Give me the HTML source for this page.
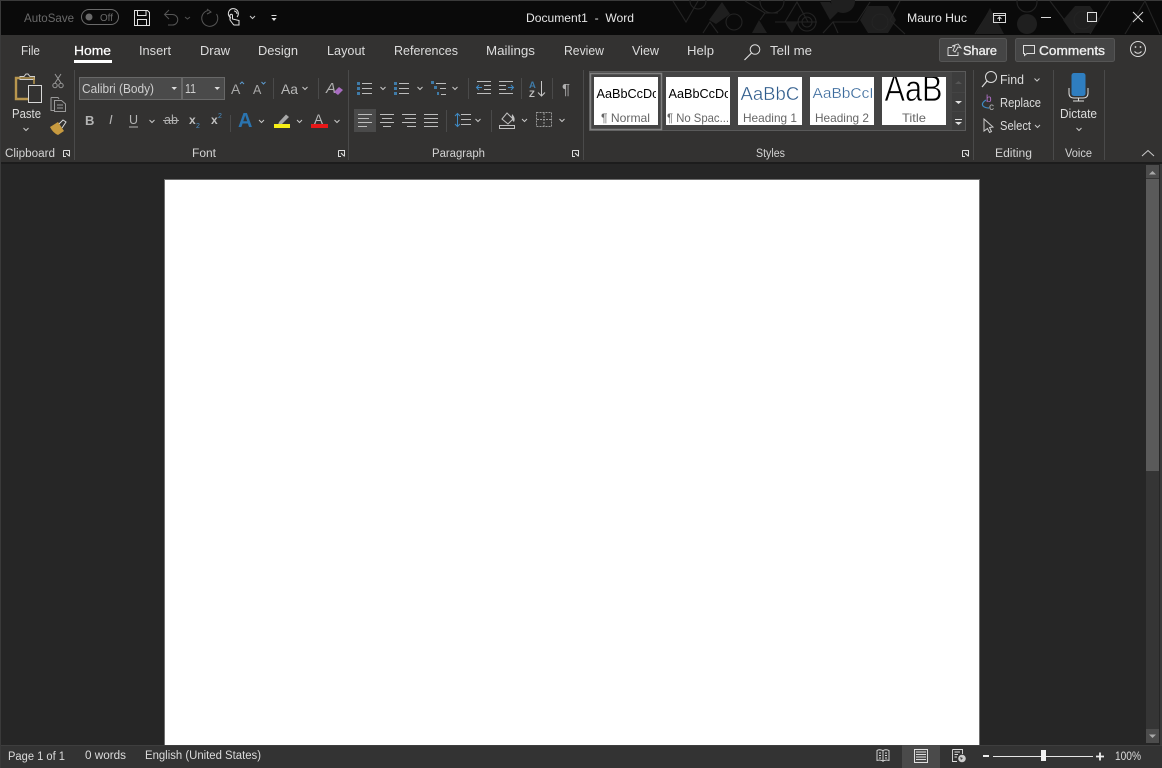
<!DOCTYPE html>
<html><head><meta charset="utf-8"><title>Document1 - Word</title>
<style>
html,body{margin:0;padding:0;background:#262626;width:1162px;height:768px;overflow:hidden}
svg{display:block}
text{font-family:"Liberation Sans",sans-serif;font-size:12.5px;fill:#dcdcdc}
.g{font-size:11.5px;fill:#d4d4d4}
.ln{fill:none;stroke:#bdbdbd;stroke-width:1}
.ch{fill:none;stroke:#c8c8c8;stroke-width:1}
.sep{stroke:#4a4a4a;stroke-width:1}
.p{fill:none;stroke:#242424;stroke-width:1.1}
.pf{fill:#1f1f1f}
</style></head><body>
<svg width="1162" height="768" viewBox="0 0 1162 768" xmlns="http://www.w3.org/2000/svg">
<!-- backgrounds -->
<rect width="1162" height="768" fill="#262626"/>
<rect x="0" y="0" width="1162" height="35" fill="#0a0a0a"/>
<rect x="0" y="0" width="1162" height="1" fill="#3a3a3a"/>
<rect x="0" y="0" width="1" height="768" fill="#3a3a3a"/>
<rect x="1" y="35" width="1161" height="127" fill="#333231"/>
<rect x="1" y="162" width="1161" height="2" fill="#1c1c1c"/>
<rect x="1" y="745" width="1161" height="23" fill="#333333"/>
<!-- title pattern -->
<g>
<path class="p" d="M673 1L686 22L698 1"/><circle class="p" cx="698" cy="1" r="8"/>
<path class="pf" d="M722 2L730 14L716 24L709 20Z"/>
<circle class="p" cx="734" cy="22" r="8"/>
<path class="p" d="M703 33L710 22L718 33M745 1L765 13L760 20M765 13H778"/>
<circle class="p" cx="772" cy="1" r="12"/>
<path class="pf" d="M752 33L759 20L767 33Z"/>
<path class="p" d="M785 22L797 2L808 22M775 22H817"/>
<path class="pf" d="M785 22H798L792 33Z"/>
<circle class="p" cx="807" cy="22" r="9"/><circle class="p" cx="807" cy="22" r="5"/>
<path class="p" d="M823 33L833 22L838 33M833 22H857M857 22L870 2"/>
<path class="pf" d="M820 2H830L838 12L830 20Z"/>
<circle class="pf" cx="843" cy="1" r="12"/>
<circle class="p" cx="880" cy="22" r="9"/>
<path class="pf" d="M868 6H888L896 20L888 33H868L860 20Z"/>
<circle class="p" cx="880" cy="22" r="8"/>
<path class="p" d="M900 1L890 20L905 34M975 34L990 10"/>
<path class="pf" d="M990 8L1004 34H976Z"/>
<circle class="p" cx="1027" cy="2" r="10"/>
<circle class="pf" cx="1027" cy="24" r="10"/>
<path class="p" d="M1050 1L1075 34M1110 1L1090 34M1125 34L1145 1L1160 34"/>
<path class="pf" d="M1075 6H1090L1100 20L1090 33H1072L1063 20Z"/>
<circle class="p" cx="1083" cy="20" r="9"/>
</g>
<!-- quick access -->
<text x="24" y="22" textLength="50" lengthAdjust="spacingAndGlyphs" style="fill:#6a6a6a;font-size:12px">AutoSave</text>
<rect x="81.500" y="9.500" width="37" height="15" rx="7.500" fill="none" stroke="#6a6a6a"/>
<circle cx="89" cy="17" r="3.500" fill="#6a6a6a"/>
<text x="100" y="21" textLength="13" lengthAdjust="spacingAndGlyphs" style="fill:#6a6a6a;font-size:10.500px">Off</text>
<path d="M134.500 10.500H147.500L149.500 12.500V25.500H134.500Z M137.500 10.500V15.500H146V10.500 M137.500 25.500V19.500H146.500V25.500" fill="none" stroke="#e0e0e0"/>
<path d="M169 10L164.500 14.500L169 19M165 14.500H172.500A5 5 0 0 1 172.500 25H168" fill="none" stroke="#555"/>
<path class="ch" style="stroke:#555" d="M185 17L187.500 19L190 17"/>
<path d="M208 10.500A8 8 0 1 0 216.500 14M207 9L211 12L207 14" fill="none" stroke="#555"/>
<path d="M234 11a3 3 0 0 1 3 3M231 18a5 5 0 1 1 6-1M233 24L230 20V15.500a1.200 1.200 0 0 1 2.500 0V19L239 20.500V25H234Z" fill="none" stroke="#e0e0e0"/>
<path class="ch" d="M250 16L252.500 18.500L255 16"/>
<path d="M271.500 15.500H276.500" stroke="#ddd"/><path d="M271.500 18H276.500L274 21Z" fill="#ddd"/>
<text x="526" y="22" textLength="108" lengthAdjust="spacingAndGlyphs" xml:space="preserve" style="font-size:12px;fill:#e6e6e6">Document1  -  Word</text>
<text x="907" y="22" textLength="60" lengthAdjust="spacingAndGlyphs" style="font-size:12px;fill:#e6e6e6">Mauro Huc</text>
<!-- window controls -->
<path d="M993.500 13.500H1005.500V22.500H993.500ZM993.500 15.500H1005.500M999.500 21V17M997.500 19L999.500 17L1001.500 19" fill="none" stroke="#d8d8d8"/>
<path d="M1041 17.500H1051" stroke="#d8d8d8"/>
<rect x="1087.500" y="12.500" width="9" height="9" fill="none" stroke="#e0e0e0"/>
<path d="M1133 12L1143 22M1143 12L1133 22" stroke="#d8d8d8"/>
<!-- tabs -->
<text x="21" y="55" textLength="19" lengthAdjust="spacingAndGlyphs">File</text>
<text x="74" y="55" textLength="37" lengthAdjust="spacingAndGlyphs" style="fill:#fff;stroke:#fff;stroke-width:.25">Home</text>
<rect x="74" y="60" width="38" height="3" fill="#fff"/>
<text x="139" y="55" textLength="32" lengthAdjust="spacingAndGlyphs">Insert</text>
<text x="200" y="55" textLength="30" lengthAdjust="spacingAndGlyphs">Draw</text>
<text x="258" y="55" textLength="40" lengthAdjust="spacingAndGlyphs">Design</text>
<text x="327" y="55" textLength="38" lengthAdjust="spacingAndGlyphs">Layout</text>
<text x="394" y="55" textLength="64" lengthAdjust="spacingAndGlyphs">References</text>
<text x="486" y="55" textLength="49" lengthAdjust="spacingAndGlyphs">Mailings</text>
<text x="564" y="55" textLength="40" lengthAdjust="spacingAndGlyphs">Review</text>
<text x="632" y="55" textLength="27" lengthAdjust="spacingAndGlyphs">View</text>
<text x="687" y="55" textLength="27" lengthAdjust="spacingAndGlyphs">Help</text>
<circle cx="755" cy="49.500" r="4.800" fill="none" stroke="#ddd"/><path d="M751.500 53L744.500 60" stroke="#ddd" stroke-width="1.200"/>
<text x="770" y="55" textLength="42" lengthAdjust="spacingAndGlyphs">Tell me</text>
<!-- share / comments -->
<rect x="939.500" y="38.500" width="67" height="23" rx="2" fill="#454545" stroke="#555"/>
<path d="M948 47.500H952M948 47.500V55.500H958V52M953 50.500L955 46H952L958 44L961 48L958 47L955 52Z" fill="none" stroke="#ddd" stroke-width=".9"/>
<text x="963" y="55" textLength="34" lengthAdjust="spacingAndGlyphs" style="fill:#eee;stroke:#eee;stroke-width:.35;font-size:13px">Share</text>
<rect x="1015.500" y="38.500" width="99" height="23" rx="2" fill="#454545" stroke="#555"/>
<path d="M1023.500 45.500H1034.500V53.500H1027L1024.500 55.500V53.500H1023.500Z" fill="none" stroke="#ddd"/>
<text x="1039" y="55" textLength="66" lengthAdjust="spacingAndGlyphs" style="fill:#eee;stroke:#eee;stroke-width:.35;font-size:13px">Comments</text>
<circle cx="1138" cy="49" r="7.500" fill="none" stroke="#ddd"/><circle cx="1135.500" cy="47" r=".9" fill="#ddd"/><circle cx="1140.500" cy="47" r=".9" fill="#ddd"/>
<path d="M1134.500 51.500Q1138 55 1141.500 51.500" fill="none" stroke="#ddd"/>
<!-- group separators -->
<path class="sep" d="M74.500 70V160M348.500 70V160M583.500 70V160M973.500 70V160M1053.500 70V160M1104.500 70V160"/>
<!-- group labels -->
<text class="g" x="5" y="157" textLength="50" lengthAdjust="spacingAndGlyphs">Clipboard</text>
<text class="g" x="192" y="157" textLength="24" lengthAdjust="spacingAndGlyphs">Font</text>
<text class="g" x="432" y="157" textLength="53" lengthAdjust="spacingAndGlyphs">Paragraph</text>
<text class="g" x="756" y="157" textLength="29" lengthAdjust="spacingAndGlyphs">Styles</text>
<text class="g" x="995" y="157" textLength="37" lengthAdjust="spacingAndGlyphs">Editing</text>
<text class="g" x="1065" y="157" textLength="27" lengthAdjust="spacingAndGlyphs">Voice</text>
<!-- launchers -->
<g fill="none" stroke="#ddd">
<path d="M63.500 150.500H69.500V156.500M63.500 150.500V156.500H66"/><path d="M66 153L69 156" stroke-width="1.200"/>
<path d="M338.500 150.500H344.500V156.500M338.500 150.500V156.500H341"/><path d="M341 153L344 156" stroke-width="1.200"/>
<path d="M572.500 150.500H578.500V156.500M572.500 150.500V156.500H575"/><path d="M575 153L578 156" stroke-width="1.200"/>
<path d="M962.500 150.500H968.500V156.500M962.500 150.500V156.500H965"/><path d="M965 153L968 156" stroke-width="1.200"/>
</g>
<path d="M1142 156L1148 150.500L1154 156" fill="none" stroke="#ccc"/>
<!-- paste -->
<path d="M20 78H16V99H28" fill="none" stroke="#b8964e" stroke-width="2.400"/>
<path d="M20 79.500V76.500H24L26 74H28L30 76.500H34.500V79.500Z" fill="none" stroke="#d0d0d0"/>
<path d="M16 78H34V84" fill="none" stroke="#b8964e" stroke-width="1.500"/>
<rect x="28.500" y="85.500" width="13" height="17" fill="#333231" stroke="#d8d8d8"/>
<text x="12" y="118" textLength="29" lengthAdjust="spacingAndGlyphs">Paste</text>
<path class="ch" d="M23.500 128L26 130.500L28.500 128"/>
<!-- cut copy painter -->
<g fill="none" stroke="#9a9a9a">
<path d="M55 74L61 83M61 74L55 83"/><circle cx="55" cy="85.500" r="2.200"/><circle cx="61" cy="85.500" r="2.200"/>
<path d="M51 97.500V110.500H54M51 97.500H58L59 99"/><path d="M54.500 100.500H61.500L65.500 104V111.500H54.500ZM57 105H63M57 108H63"/>
</g>
<path d="M50 127L58 122L64 131L58 135Q53 133 50 127Z" fill="#c79a3f"/>
<path d="M59 124L63 120L66 122L62 128" fill="none" stroke="#d8d8d8"/>
<!-- font boxes -->
<rect x="79.500" y="77.500" width="102" height="22" fill="#4a4a4a" stroke="#686868"/>
<rect x="182.500" y="77.500" width="42" height="22" fill="#4a4a4a" stroke="#686868"/>
<text x="82" y="93" textLength="72" lengthAdjust="spacingAndGlyphs" style="fill:#cfcfcf">Calibri (Body)</text>
<text x="185" y="93" textLength="11" lengthAdjust="spacingAndGlyphs" style="fill:#cfcfcf">11</text>
<path d="M171.500 87H177L174.200 90Z" fill="#ddd"/>
<path d="M214.500 87H220L217.200 90Z" fill="#ddd"/>
<text x="231" y="94" style="font-size:14px;fill:#a8a8a8">A</text>
<path d="M240 84L242 82L244 84" fill="none" stroke="#5c9bd0"/>
<text x="253" y="94" style="font-size:12.500px;fill:#a8a8a8">A</text>
<path d="M261.500 82L263.500 84L265.500 82" fill="none" stroke="#5c9bd0"/>
<path class="sep" d="M273.500 78V99M318.500 78V99M230.500 115V132"/>
<text x="281" y="94" textLength="17" lengthAdjust="spacingAndGlyphs" style="font-size:14px;fill:#b8b8b8">Aa</text>
<path class="ch" d="M302.500 87L305 89.500L307.500 87"/>
<text x="326" y="93" style="font-size:15px;font-style:italic;fill:#b0b0b0">A</text>
<path d="M334 92L339 87L343 90L338 95Z" fill="#a86cc0"/>
<!-- font row 2 -->
<text x="85" y="125" style="font-weight:bold;font-size:13px;fill:#b4b4b4">B</text>
<text x="109" y="124" style="font-style:italic;font-size:13px;fill:#b4b4b4">I</text>
<text x="129" y="124" style="font-size:12.500px;fill:#b4b4b4">U</text>
<path d="M129 127H138" stroke="#b4b4b4"/>
<path class="ch" d="M149.500 120L152 122.500L154.500 120"/>
<text x="164" y="124" style="font-size:12.500px;fill:#b0b0b0">ab</text>
<path d="M163 120.500H179" stroke="#b0b0b0"/>
<text x="189" y="124" style="font-weight:bold;font-size:12px;fill:#c0c0c0">x</text><text x="196" y="128" style="font-size:7px;fill:#4a90c8">2</text>
<text x="211" y="124" style="font-weight:bold;font-size:12px;fill:#c0c0c0">x</text><text x="218" y="118" style="font-size:7px;fill:#4a90c8">2</text>
<text x="238" y="127" style="font-weight:bold;font-size:20px;fill:#2a74b0">A</text>
<path class="ch" d="M259 120L261.500 122.500L264 120"/>
<path d="M279 122L286 114.500L289 117L282 124L278 125Z" fill="#a8a8a8"/>
<rect x="274" y="124" width="16" height="4" fill="#f6ee16"/>
<path class="ch" d="M297 120L299.500 122.500L302 120"/>
<text x="314" y="124" style="font-size:13.500px;fill:#b8b8b8">A</text>
<rect x="311" y="124" width="17" height="4" fill="#e81818"/>
<path class="ch" d="M334.500 120L337 122.500L339.500 120"/>
<!-- paragraph row 1 -->
<g fill="#3f7ba8"><rect x="357" y="82" width="3" height="3"/><rect x="357" y="87" width="3" height="3"/><rect x="357" y="92" width="3" height="3"/></g>
<path class="ln" d="M362 83.500H372M362 88.500H372M362 93.500H372"/>
<path class="ch" d="M380.500 87L383 89.500L385.500 87"/>
<g fill="#3f7ba8"><rect x="394" y="82" width="3" height="3"/><rect x="394" y="87" width="3" height="3"/><rect x="394" y="92" width="3" height="3"/></g>
<path class="ln" d="M399 83.500H409M399 88.500H409M399 93.500H409"/>
<path class="ch" d="M417.500 87L420 89.500L422.500 87"/>
<g fill="#3f7ba8"><rect x="431" y="81" width="3" height="3"/><rect x="434" y="86" width="3" height="3"/><rect x="437" y="92" width="2" height="3"/></g>
<path class="ln" d="M436 83.500H446M440 88.500H446M441 94.500H446"/>
<path class="ch" d="M452.500 87L455 89.500L457.500 87"/>
<path class="sep" d="M468.500 78V99M521.500 78V99M552.500 78V99M446.500 110V132M491.500 110V132"/>
<path class="ln" d="M477 81.500H491M484 85.500H491M484 89.500H491M477 93.500H491"/>
<path d="M482 87.500H477M479 85L476.500 87.500L479 90" fill="none" stroke="#3f8ac4"/>
<path class="ln" d="M499 81.500H513M499 85.500H506M499 89.500H506M499 93.500H513"/>
<path d="M508 87.500H513M511 85L513.500 87.500L511 90" fill="none" stroke="#3f8ac4"/>
<text x="529" y="88" style="font-size:9.500px;font-weight:bold;fill:#3f7ba8">A</text>
<text x="529" y="97" style="font-size:9.500px;font-weight:bold;fill:#c0c0c0">Z</text>
<path d="M541.500 81V96M538 92.500L541.500 96L545 92.500" fill="none" stroke="#c8c8c8"/>
<text x="562" y="94" style="font-size:15px;fill:#b0b0b0">¶</text>
<!-- paragraph row 2 -->
<rect x="354" y="109" width="22" height="23" fill="#4a4a4a"/>
<path class="ln" d="M358 114.500H372M358 118.500H369M358 122.500H372M358 126.500H367"/>
<path class="ln" d="M380 114.500H394M382 118.500H392M380 122.500H394M383 126.500H391"/>
<path class="ln" d="M402 114.500H416M405 118.500H416M402 122.500H416M407 126.500H416"/>
<path class="ln" d="M424 114.500H438M424 118.500H438M424 122.500H438M424 126.500H438"/>
<path d="M457.500 114V126M455 116L457.500 113.500L460 116M455 124L457.500 126.500L460 124" fill="none" stroke="#3f8ac4"/>
<path class="ln" d="M461 114.500H471M461 119.500H471M461 124.500H471"/>
<path class="ch" d="M475.500 119L478 121.500L480.500 119"/>
<path d="M502 119L507 113L513 119L508 124Z" fill="none" stroke="#c0c0c0"/>
<path d="M512 114Q516 118 514 122Q511 120 512 114Z" fill="#c0c0c0"/>
<rect x="499.500" y="125.500" width="15" height="3" fill="none" stroke="#c0c0c0"/>
<path class="ch" d="M522 119L524.500 121.500L527 119"/>
<rect x="536.500" y="112.500" width="15" height="14" fill="none" stroke="#999" stroke-dasharray="2 1"/>
<path d="M544 113V126M537 119.500H551" stroke="#999" stroke-dasharray="2 1"/>
<path class="ch" d="M559.500 119L562 121.500L564.500 119"/>
<!-- styles gallery -->
<rect x="589.500" y="71.500" width="376" height="59" fill="#444" stroke="#5a5a5a"/>
<rect x="590.500" y="73.500" width="71" height="56" fill="none" stroke="#808080" stroke-width="1.500"/>
<g fill="#fff"><rect x="594" y="77" width="64" height="48"/><rect x="666" y="77" width="64" height="48"/><rect x="738" y="77" width="64" height="48"/><rect x="810" y="77" width="64" height="48"/><rect x="882" y="77" width="64" height="48"/></g>
<svg x="594" y="77" width="62" height="48"><text x="2.500" y="21" textLength="62" lengthAdjust="spacingAndGlyphs" style="fill:#000;font-size:12.500px">AaBbCcDc</text></svg>
<text x="601" y="122" textLength="49" lengthAdjust="spacingAndGlyphs" style="fill:#666;font-size:12px">¶ Normal</text>
<svg x="666" y="77" width="62" height="48"><text x="2.500" y="21" textLength="62" lengthAdjust="spacingAndGlyphs" style="fill:#000;font-size:12.500px">AaBbCcDc</text></svg>
<text x="667" y="122" textLength="62" lengthAdjust="spacingAndGlyphs" style="fill:#666;font-size:12px">¶ No Spac...</text>
<svg x="738" y="77" width="62" height="48"><text x="2.500" y="23" textLength="68" lengthAdjust="spacingAndGlyphs" style="fill:#2f5c8c;stroke:#fff;stroke-width:.35;font-size:18px">AaBbCc</text></svg>
<text x="743" y="122" textLength="54" lengthAdjust="spacingAndGlyphs" style="fill:#666;font-size:12px">Heading 1</text>
<svg x="810" y="77" width="62" height="48"><text x="2.500" y="21" textLength="68" lengthAdjust="spacingAndGlyphs" style="fill:#3a6a9c;stroke:#fff;stroke-width:.25;font-size:15px">AaBbCcD</text></svg>
<text x="815" y="122" textLength="54" lengthAdjust="spacingAndGlyphs" style="fill:#666;font-size:12px">Heading 2</text>
<svg x="882" y="77" width="64" height="48"><text x="2.500" y="24" textLength="58" lengthAdjust="spacingAndGlyphs" style="fill:#000;stroke:#fff;stroke-width:.7;font-size:37px">AaB</text></svg>
<text x="902" y="122" textLength="24" lengthAdjust="spacingAndGlyphs" style="fill:#666;font-size:12px">Title</text>
<rect x="952" y="72" width="13" height="20" fill="#3d3d3d"/><rect x="952" y="93" width="13" height="18" fill="#3d3d3d"/><rect x="952" y="112" width="13" height="18" fill="#3d3d3d"/>
<path d="M955 84L958.500 81L962 84Z" fill="#555"/>
<path d="M955 101H962L958.500 104Z" fill="#e0e0e0"/>
<path d="M955 119.500H962" stroke="#e0e0e0"/><path d="M955 122H962L958.500 125Z" fill="#e0e0e0"/>
<!-- editing -->
<circle cx="991" cy="77" r="5.500" fill="none" stroke="#ddd"/><path d="M987 81L982 87" stroke="#ddd" stroke-width="1.200"/>
<text x="1000" y="84" textLength="24" lengthAdjust="spacingAndGlyphs">Find</text>
<path class="ch" d="M1034.500 78.500L1037 81L1039.500 78.500"/>
<text x="986" y="102" style="font-size:10px;fill:#b070c8">b</text>
<text x="989" y="110" style="font-size:10px;fill:#b8b8b8">c</text>
<path d="M986 100Q981 103 983 106Q985 108 989 108" fill="none" stroke="#3f8ac4" stroke-width="1.200"/>
<text x="1000" y="107" textLength="41" lengthAdjust="spacingAndGlyphs">Replace</text>
<path d="M984 119L984 131L987.500 128.500L989.500 132.500L991.500 131.500L989.500 127.500L993 127Z" fill="none" stroke="#ccc"/>
<text x="1000" y="130" textLength="31" lengthAdjust="spacingAndGlyphs">Select</text>
<path class="ch" d="M1035 125L1037.500 127.500L1040 125"/>
<!-- voice -->
<rect x="1071.500" y="73" width="14" height="23" rx="2.500" fill="#2f7ec0"/>
<path d="M1069 88V93Q1069 98 1074 98H1083Q1088 98 1088 93V88" fill="none" stroke="#ddd"/>
<path d="M1078.500 98V101M1073 101H1084" stroke="#ddd"/>
<text x="1060" y="118" textLength="37" lengthAdjust="spacingAndGlyphs">Dictate</text>
<path class="ch" d="M1076.500 128L1079 130.500L1081.500 128"/>
<!-- page -->
<rect x="164.500" y="179.500" width="815" height="570" fill="#fff" stroke="#6e6e6e"/>
<!-- scrollbar -->
<rect x="1146" y="165" width="13" height="578" fill="#353535"/>
<rect x="1146" y="165" width="13" height="13" fill="#4c4c4c"/>
<path d="M1149 174.500L1152.500 171L1156 174.500Z" fill="#aaa"/>
<rect x="1146" y="179" width="13" height="292" fill="#5a5a5a"/>
<rect x="1146" y="729" width="13" height="14" fill="#4c4c4c"/>
<path d="M1149 734.500H1156L1152.500 738Z" fill="#aaa"/>
<rect x="1160" y="164" width="2" height="581" fill="#3a3a3a"/>
<!-- status -->
<rect x="1" y="745" width="1161" height="23" fill="#333333"/>
<rect x="1" y="745" width="1161" height="1" fill="#3e3e3e"/>
<text x="8" y="760" textLength="57" lengthAdjust="spacingAndGlyphs" style="font-size:11.500px">Page 1 of 1</text>
<text x="85" y="759" textLength="41" lengthAdjust="spacingAndGlyphs" style="font-size:11.500px">0 words</text>
<text x="145" y="759" textLength="116" lengthAdjust="spacingAndGlyphs" style="font-size:11.500px">English (United States)</text>
<path d="M883 750.500Q879 749 877 750.500V760.500Q880 759.500 883 761Q886 759.500 889 760.500V750.500Q886 749 883 750.500ZM883 750.500V762M879 753H881M879 755.500H881M879 758H881M885 753H887M885 755.500H887M885 758H887" fill="none" stroke="#ddd" stroke-width=".9"/>
<rect x="902" y="745" width="38" height="23" fill="#4a4a4a"/>
<rect x="914.500" y="749.500" width="13" height="13" fill="none" stroke="#e0e0e0"/>
<path d="M916 752H926M916 754.500H926M916 757H926M916 759.500H926" stroke="#e0e0e0"/>
<path d="M952.500 749.500H962.500V754M952.500 749.500V761.500H957M954.500 752H960M954.500 754.500H958M954.500 757H957" fill="none" stroke="#ddd" stroke-width=".9"/>
<circle cx="962" cy="758.500" r="3.800" fill="#ccc"/><path d="M960 757L963 758L961 760Z" fill="#444"/>
<rect x="983" y="755" width="6" height="2" fill="#eee"/>
<rect x="993" y="756" width="100" height="1" fill="#e6e6e6"/>
<rect x="1041" y="750" width="5" height="11" fill="#f2f2f2"/>
<path d="M1096 756.500H1104M1100 752.500V760.500" stroke="#eee" stroke-width="1.800"/>
<text x="1115" y="760" textLength="26" lengthAdjust="spacingAndGlyphs" style="font-size:11.500px">100%</text>
</svg>
</body></html>
